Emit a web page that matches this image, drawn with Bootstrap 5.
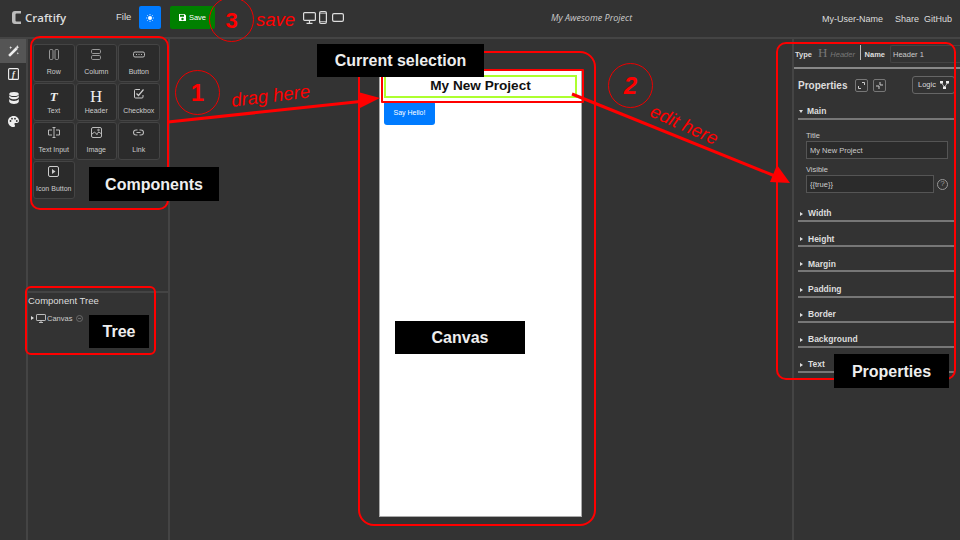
<!DOCTYPE html>
<html lang="en">
<head>
    <meta charset="UTF-8">
    <meta name="viewport" content="width=device-width, initial-scale=1.0">
    <title>Craftify</title>
    <link href="https://cdn.jsdelivr.net/npm/bootstrap@5.3.0/dist/css/bootstrap.min.css" rel="stylesheet">
    <style>
        html, body { height: 100%; }
        body { width: 960px; height: 540px; overflow: hidden; background: #333; color: #ddd; font-family: "Liberation Sans", Arial, sans-serif; font-size: 9.5px; position: relative; }
        .top-bar { height: 39px; border-bottom: 2px solid #444; padding: 0 0 2px 12px; }
        .brand-name { font-family: "Open Sans", sans-serif; font-size: 11.5px; font-weight: 600; color: #ddd; margin-left: 4px; width: 91px; }
        .file-link { font-size: 9.5px; width: 23px; }
        .sun-btn { width: 22px; height: 23px; background: #007bff; border-radius: 2px; }
        .save-btn { width: 45px; height: 23px; background: #008000; color: #fff; border-radius: 2px; font-size: 7.5px; margin-left: 9px; gap: 3px; }
        .project-name { position: absolute; left: 551px; top: 11px; font-family: "Open Sans", sans-serif; font-style: italic; font-size: 9px; color: #ccc; }
        .user-links { position: absolute; left: 822px; top: 13px; font-size: 9px; }
        .user-name { width: 73px; }
        .user-share { width: 29px; }
        .device-icons { position: absolute; left: 303px; top: 11px; }
        .dev-phone { margin: 0 5px 0 3px; }

        .work-area { height: 501px; }
        .side-rail { width: 28px; border-right: 2px solid #444; }
        .rail-item { height: 23.5px; padding-left: 1px; }
        .rail-item.on { background: #555; }
        .palette { width: 142px; border-right: 2px solid #444; }
        .palette-top { height: 254px; border-bottom: 2px solid #444; padding: 5px 0 0 5px; }
        .comp-grid { grid-template-columns: repeat(3, 41.5px); grid-auto-rows: 38px; gap: 1px; }
        .comp-tile { background: #2b2b2b; border: 1px solid #444; border-radius: 3px; font-size: 7px; line-height: 10px; color: #ccc; padding-top: 4px; }
        .tile-icon { height: 18px; }
        .tile-serif { font-family: "Liberation Serif", serif; color: #eee; line-height: 17px; }
        .tile-t { font-size: 13px; font-weight: 700; font-style: italic; }
        .tile-h { font-size: 17px; font-weight: 400; }
        .tree-title { font-size: 9.5px; margin-top: 1px; }
        .tree-row { font-size: 7.5px; padding-left: 1px; margin-top: 5px; gap: 1px; color: #ccc; }
        .tree-mark { margin-left: 3px; }

        .stage { width: 622px; padding: 31px 0 0 209px; }
        .phone { width: 203px; height: 447px; background: #fff; border: 1px solid #aaa; padding: 4px 0 0 4px; }
        .head-box { width: 193px; height: 23px; border: 2px solid #adff2f; color: #111; font-size: 13.6px; font-weight: 700; }
        .hello-btn { width: 51px; height: 24px; margin-top: 3px; background: #007bff; color: #fff; border-radius: 3px; font-size: 7px; }

        .props { width: 168px; border-left: 2px solid #444; }
        .type-row { height: 30px; border-bottom: 2px solid #888; padding: 6px 0 0 1px; font-size: 7.5px; }
        .type-h { font-family: "Liberation Serif", serif; color: #777; font-size: 13px; line-height: 15px; margin-left: 6px; }
        .type-val { font-style: italic; color: #777; font-size: 7.5px; margin-left: 3px; width: 32px; }
        .type-sep { width: 1px; height: 15px; background: #bbb; margin-right: 4px; }
        input.name-input { width: 70px; height: 18px; margin-left: 5px; padding: 0 2px; background: #333; border: 1px solid #444; border-right: 0; border-radius: 2px 0 0 2px; color: #ccc; font-size: 7.5px; }
        .prop-body { padding: 7px 5px 0 4px; }
        .prop-title { font-size: 10px; font-weight: 700; height: 18px; }
        .sq-btn { width: 13px; height: 13px; border: 1px solid #777; border-radius: 2px; margin-left: 5px; }
        .logic-btn { width: 43px; height: 18px; border: 1px solid #666; border-radius: 3px; font-size: 7.5px; font-weight: 400; gap: 4px; }
        .sec-head { height: 25.17px; border-bottom: 2px solid #777; font-size: 8.5px; font-weight: 700; gap: 4px; color: #ddd; }
        .sec-head.first { height: 20px; margin-top: 6px; }
        .caret-r { border-left: 3px solid #ddd; border-top: 2px solid transparent; border-bottom: 2px solid transparent; margin: 0 1px 4px 2px; }
        .tree-row .caret-r { margin-bottom: 1px; }
        .caret-d { border-top: 3px solid #ddd; border-left: 2.5px solid transparent; border-right: 2.5px solid transparent; margin: 0 0 5px 1px; }
        .main-fields { padding: 11px 7px 0 8px; font-size: 7.5px; height: 77px; }
        .main-fields label { display: block; color: #ccc; line-height: 10px; }
        input.dark-input { display: block; height: 18px; padding: 0 3px; background: #2b2b2b; border: 1px solid #555; border-radius: 0; color: #ccc; font-size: 7.5px; font-family: "Liberation Sans", sans-serif; box-shadow: none; margin-bottom: 6px; }
        .help-mark { width: 11px; height: 11px; border: 1px solid #999; border-radius: 50%; font-size: 8px; color: #999; margin: 0 0 6px 3px; }

        .notes { position: absolute; inset: 0; pointer-events: none; }
        .red-frame { position: absolute; border: 2px solid #f00; }
        .frame-comp { left: 30px; top: 36px; width: 139px; height: 174px; border-radius: 10px; }
        .frame-tree { left: 25px; top: 286px; width: 131px; height: 69px; border-radius: 6px; }
        .frame-canvas { left: 358px; top: 51px; width: 238px; height: 475px; border-radius: 16px; }
        .frame-props { left: 776px; top: 42px; width: 180px; height: 338px; border-radius: 10px; }
        .frame-sel { left: 381px; top: 69px; width: 203px; height: 34px; border-radius: 1px; }
        .arrows { position: absolute; left: 0; top: 0; }
        .black-tag { position: absolute; background: #000; color: #eee; font-weight: 700; font-size: 16px; padding-top: 1px; }
        .tag-sel { left: 317px; top: 44px; width: 167px; height: 33px; }
        .tag-comp { left: 89px; top: 167px; width: 130px; height: 34px; }
        .tag-tree { left: 89px; top: 315px; width: 60px; height: 33px; }
        .tag-canvas { left: 395px; top: 321px; width: 130px; height: 33px; }
        .tag-props { left: 834px; top: 354px; width: 115px; height: 34px; }
        .red-ring { position: absolute; width: 45px; height: 45px; border: 1px solid #e00; border-radius: 50%; color: #f00; font-size: 24px; font-weight: 700; }
        .ring-one { left: 175px; top: 70px; }
        .ring-two { left: 608px; top: 63px; font-style: italic; }
        .ring-three { left: 209px; top: -3px; font-size: 22px; padding-top: 2px; }
        .red-note { position: absolute; color: #f00; font-style: italic; font-size: 18.5px; white-space: nowrap; line-height: 1; }
        .note-drag { left: 231px; top: 87px; transform: rotate(-7deg); }
        .note-edit { left: 648px; top: 116px; transform: rotate(24deg); }
        .note-save { left: 256px; top: 11px; }
    </style>
</head>
<body>
    <!-- top bar -->
    <div class="top-bar d-flex align-items-center">
        <svg width="9" height="13" viewBox="0 0 9 13"><path d="M9 0H3C1 0 0 1 0 3v7c0 2 1 3 3 3h6v-2.500H4.500q-1 0-1-1v-6q0-1 1-1H9z" fill="#bbb"/></svg>
        <span class="brand-name">Craftify</span>
        <span class="file-link">File</span>
        <div class="sun-btn d-flex align-items-center justify-content-center">
            <svg width="8" height="8" viewBox="0 0 8 8"><circle cx="4" cy="4" r="2" fill="#fff"/><path d="M4 0v1.200M4 6.800V8M0 4h1.200M6.800 4H8M1.200 1.200l.9.9M5.900 5.900l.9.9M1.200 6.800l.9-.9M5.900 2.100l.9-.9" stroke="#fff" stroke-width=".7"/></svg>
        </div>
        <div class="save-btn d-flex align-items-center justify-content-center">
            <svg width="7" height="7" viewBox="0 0 7 7"><path d="M0 0h5.500L7 1.500V7H0zM1 .8v2h4v-2zM3.500 3.800a1.200 1.200 0 100 2.400 1.200 1.200 0 000-2.400z" fill="#fff" fill-rule="evenodd"/></svg>
            <span>Save</span>
        </div>
        <div class="device-icons d-flex align-items-center">
            <svg width="13" height="12" viewBox="0 0 13 12" fill="none" stroke="#ddd" stroke-width="1.200"><rect x=".6" y=".6" width="11.800" height="7.800" rx="1"/><path d="M6.500 8.500v2.500M3.500 11.300h6"/></svg>
            <svg class="dev-phone" width="8" height="13" viewBox="0 0 8 13" fill="none" stroke="#ddd" stroke-width="1.200"><rect x=".6" y=".6" width="6.800" height="11.800" rx="1.400"/><path d="M.6 2.300h6.800M.6 10.500h6.800" stroke-width=".7"/></svg>
            <svg width="12" height="9" viewBox="0 0 12 9" fill="none" stroke="#ddd" stroke-width="1.200"><rect x=".6" y=".6" width="10.800" height="7.800" rx="1.400"/></svg>
        </div>
        <span class="project-name">My Awesome Project</span>
        <div class="user-links d-flex">
            <span class="user-name">My-User-Name</span>
            <span class="user-share">Share</span>
            <span>GitHub</span>
        </div>
    </div>

    <div class="work-area d-flex">
        <!-- left icon rail -->
        <div class="side-rail flex-shrink-0">
            <div class="rail-item on d-flex align-items-center justify-content-center">
                <svg width="12" height="12" viewBox="0 0 11 11"><path d="M1 10L8 3" stroke="#eee" stroke-width="2.400"/><path d="M8.500 0l.5 1.300L10.300 2 9 2.500 8.500 4 8 2.500 6.800 2 8 1.300zM2.500 1l.4 1 1 .4-1 .4-.4 1-.4-1-1-.4 1-.4zM9 6.500l.3.8.8.3-.8.3-.3.8-.3-.8-.8-.3.8-.3z" fill="#eee"/></svg>
            </div>
            <div class="rail-item d-flex align-items-center justify-content-center">
                <svg width="11" height="12" viewBox="0 0 11 12"><rect x=".6" y=".6" width="9.800" height="10.800" rx="1" fill="none" stroke="#eee" stroke-width="1.100"/><text x="5.500" y="9" font-family="Liberation Serif" font-style="italic" font-weight="700" font-size="8.500" text-anchor="middle" fill="#eee">f</text></svg>
            </div>
            <div class="rail-item d-flex align-items-center justify-content-center">
                <svg width="10" height="12" viewBox="0 0 10 12" fill="#eee"><ellipse cx="5" cy="2" rx="4.800" ry="2"/><path d="M.2 3.200C.8 4.500 3 5 5 5s4.200-.5 4.800-1.800v2C9.200 6.600 7 7.200 5 7.200S.8 6.600.2 5.200zM.2 7c.6 1.300 2.800 1.900 4.800 1.900S9.200 8.300 9.800 7v2.800C9.200 11.300 7 12 5 12S.8 11.300.2 9.800z"/></svg>
            </div>
            <div class="rail-item d-flex align-items-center justify-content-center">
                <svg width="11" height="11" viewBox="0 0 11 11"><path d="M5.500 0C2.500 0 0 2.400 0 5.400S2.500 11 5.500 11c1 0 1.500-.6 1.500-1.300 0-.9-.6-1.100-.6-1.800 0-.6.5-1 1.200-1H9c1.200 0 2-.8 2-2.100C11 2.100 8.500 0 5.500 0z" fill="#eee"/><circle cx="2.500" cy="5" r=".9" fill="#333"/><circle cx="4" cy="2.700" r=".9" fill="#333"/><circle cx="7" cy="2.700" r=".9" fill="#333"/><circle cx="8.800" cy="5" r=".9" fill="#333"/></svg>
            </div>
        </div>

        <!-- components and tree -->
        <div class="palette flex-shrink-0">
            <div class="palette-top">
                <div class="comp-grid d-grid">
                    <div class="comp-tile text-center">
                        <div class="tile-icon"><svg width="10" height="11" viewBox="0 0 10 11" fill="none" stroke="#999"><rect x=".5" y=".5" width="3.500" height="10" rx="1.200"/><rect x="6" y=".5" width="3.500" height="10" rx="1.200"/></svg></div>
                        Row
                    </div>
                    <div class="comp-tile text-center">
                        <div class="tile-icon"><svg width="10" height="11" viewBox="0 0 10 11" fill="none" stroke="#999"><rect x=".5" y=".5" width="9" height="4" rx="1.200"/><rect x=".5" y="6.500" width="9" height="4" rx="1.200"/></svg></div>
                        Column
                    </div>
                    <div class="comp-tile text-center">
                        <div class="tile-icon"><svg width="12" height="11" viewBox="0 0 12 11" fill="none" stroke="#bbb"><rect x=".5" y="3" width="11" height="5" rx="1.500"/><path d="M3 5.500h1M5.500 5.500h1M8 5.500h1"/></svg></div>
                        Button
                    </div>
                    <div class="comp-tile text-center">
                        <div class="tile-icon tile-serif"><span class="tile-t">T</span></div>
                        Text
                    </div>
                    <div class="comp-tile text-center">
                        <div class="tile-icon tile-serif"><span class="tile-h">H</span></div>
                        Header
                    </div>
                    <div class="comp-tile text-center">
                        <div class="tile-icon"><svg width="10" height="11" viewBox="0 0 10 11" fill="none" stroke="#ccc"><path d="M6 1.500H1.500q-1 0-1 1V9q0 1 1 1H8q1 0 1-1V7"/><path d="M2.500 5.500L4.500 7.500 9.500 1.500" stroke-width="1.200"/></svg></div>
                        Checkbox
                    </div>
                    <div class="comp-tile text-center">
                        <div class="tile-icon"><svg width="12" height="11" viewBox="0 0 12 11" fill="none" stroke="#bbb"><path d="M4 3H.5v5H4M8 3h3.500v5H8M6 .5v10M4.500.5h3M4.500 10.500h3"/></svg></div>
                        Text Input
                    </div>
                    <div class="comp-tile text-center">
                        <div class="tile-icon"><svg width="11" height="11" viewBox="0 0 11 11" fill="none" stroke="#bbb"><rect x=".5" y=".5" width="10" height="10" rx="1.500"/><path d="M.5 7.500L3.500 5l3 3M5.500 7L8 5l2.500 2"/><circle cx="7.500" cy="3" r=".8"/></svg></div>
                        Image
                    </div>
                    <div class="comp-tile text-center">
                        <div class="tile-icon"><svg width="11" height="11" viewBox="0 0 11 11" fill="none" stroke="#bbb" stroke-width="1.100"><path d="M4.500 3H3a2.500 2.500 0 000 5h1.500M6.500 3H8a2.500 2.500 0 010 5H6.500M3.500 5.500h4"/></svg></div>
                        Link
                    </div>
                    <div class="comp-tile text-center">
                        <div class="tile-icon"><svg width="11" height="11" viewBox="0 0 11 11"><rect x=".5" y=".5" width="10" height="10" rx="1.500" fill="none" stroke="#ccc"/><path d="M4 3l3.500 2.500L4 8z" fill="#ccc"/></svg></div>
                        Icon Button
                    </div>
                </div>
            </div>
            <div class="tree-title">Component Tree</div>
            <div class="tree-row d-flex align-items-center">
                <span class="caret-r"></span>
                <svg width="10" height="9" viewBox="0 0 10 9" fill="none" stroke="#ccc" stroke-width=".9"><rect x=".5" y=".5" width="9" height="6" rx=".6"/><path d="M5 6.500v2M3 8.500h4"/></svg>
                <span>Canvas</span>
                <svg class="tree-mark" width="7" height="7" viewBox="0 0 7 7" fill="none" stroke="#777" stroke-width=".8"><circle cx="3.500" cy="3.500" r="3"/><path d="M2 3.500h3"/></svg>
            </div>
        </div>

        <!-- canvas -->
        <div class="stage flex-shrink-0">
            <div class="phone">
                <div class="head-box d-flex align-items-center justify-content-center">My New Project</div>
                <div class="hello-btn d-flex align-items-center justify-content-center">Say Hello!</div>
            </div>
        </div>

        <!-- properties -->
        <div class="props flex-shrink-0">
            <div class="type-row d-flex align-items-start">
                <b class="mt-1">Type</b>
                <span class="type-h">H</span>
                <span class="type-val mt-1">Header</span>
                <span class="type-sep"></span>
                <b class="mt-1">Name</b>
                <input class="name-input" type="text" value="Header 1">
            </div>
            <div class="prop-body">
                <div class="prop-title d-flex align-items-center">
                    <span>Properties</span>
                    <span class="sq-btn ms-2 d-flex align-items-center justify-content-center"><svg width="7" height="7" viewBox="0 0 7 7" fill="none" stroke="#ccc"><path d="M4 .5h2.500V3M3 6.500H.5V4"/></svg></span>
                    <span class="sq-btn d-flex align-items-center justify-content-center"><svg width="7" height="7" viewBox="0 0 7 7" fill="none" stroke="#ccc"><path d="M4 0v3h3M3 7V4H0"/></svg></span>
                    <span class="logic-btn ms-auto d-flex align-items-center justify-content-center">Logic
                        <svg width="9" height="8" viewBox="0 0 9 8" fill="#eee"><rect width="3" height="2.500"/><rect x="6" width="3" height="2.500"/><rect x="3" y="5.500" width="3" height="2.500"/><path d="M1.500 2L4.500 6M7.500 2L4.500 6" stroke="#eee" stroke-width=".7"/></svg>
                    </span>
                </div>
                <div class="sec-head first d-flex align-items-end"><span class="caret-d"></span>Main</div>
                <div class="main-fields">
                    <label for="title-field">Title</label>
                    <input id="title-field" class="dark-input form-control" type="text" value="My New Project">
                    <label for="visible-field">Visible</label>
                    <div class="d-flex align-items-center">
                        <input id="visible-field" class="dark-input form-control" type="text" value="{{true}}">
                        <span class="help-mark flex-shrink-0 d-flex align-items-center justify-content-center">?</span>
                    </div>
                </div>
                <div class="sec-head d-flex align-items-end"><span class="caret-r"></span>Width</div>
                <div class="sec-head d-flex align-items-end"><span class="caret-r"></span>Height</div>
                <div class="sec-head d-flex align-items-end"><span class="caret-r"></span>Margin</div>
                <div class="sec-head d-flex align-items-end"><span class="caret-r"></span>Padding</div>
                <div class="sec-head d-flex align-items-end"><span class="caret-r"></span>Border</div>
                <div class="sec-head d-flex align-items-end"><span class="caret-r"></span>Background</div>
                <div class="sec-head d-flex align-items-end"><span class="caret-r"></span>Text</div>
            </div>
        </div>
    </div>

    <!-- tutorial annotations drawn over the app -->
    <div class="notes">
        <div class="red-frame frame-comp"></div>
        <div class="red-frame frame-tree"></div>
        <div class="red-frame frame-canvas"></div>
        <div class="red-frame frame-props"></div>
        <div class="red-frame frame-sel"></div>

        <svg class="arrows" width="960" height="540">
            <path d="M168 122L365 101" stroke="#f00" stroke-width="3"/>
            <path d="M380 98L358 92V109z" fill="#f00"/>
            <path d="M572 94L775 176" stroke="#f00" stroke-width="3"/>
            <path d="M790 183L770 182L777 165z" fill="#f00"/>
        </svg>

        <div class="red-ring ring-one d-flex align-items-center justify-content-center">1</div>
        <div class="red-ring ring-two d-flex align-items-center justify-content-center">2</div>
        <div class="red-ring ring-three d-flex align-items-center justify-content-center">3</div>

        <div class="red-note note-drag">drag here</div>
        <div class="red-note note-edit">edit here</div>
        <div class="red-note note-save">save</div>

        <div class="black-tag tag-sel d-flex align-items-center justify-content-center">Current selection</div>
        <div class="black-tag tag-comp d-flex align-items-center justify-content-center">Components</div>
        <div class="black-tag tag-tree d-flex align-items-center justify-content-center">Tree</div>
        <div class="black-tag tag-canvas d-flex align-items-center justify-content-center">Canvas</div>
        <div class="black-tag tag-props d-flex align-items-center justify-content-center">Properties</div>
    </div>

    <script src="https://cdn.jsdelivr.net/npm/bootstrap@5.3.0/dist/js/bootstrap.bundle.min.js"></script>
</body>
</html>
